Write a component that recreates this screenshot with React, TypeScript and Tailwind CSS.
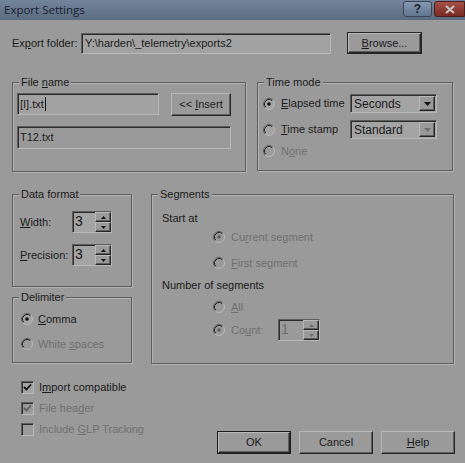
import React from "react";

const sunken =
  "border border-t-[#5c5c5c] border-l-[#5c5c5c] border-b-[#b9b9b9] border-r-[#b9b9b9] shadow-[inset_1px_1px_0_#2b2b2b]";
const raised =
  "border border-t-[#b9b9b9] border-l-[#b9b9b9] border-b-[#262626] border-r-[#262626] shadow-[inset_-1px_-1px_0_#5e5e5e] bg-[#9a9a9a]";

const Radio = ({ checked, disabled }: { checked?: boolean; disabled?: boolean }) => (
  <svg width="12" height="12" viewBox="0 0 12 12" className="shrink-0">
    <circle cx="6" cy="6" r="5.5" fill={disabled ? "#9a9a9a" : "#a4a4a4"} />
    <path d="M2.11 9.89 A5.5 5.5 0 0 1 9.89 2.11" fill="none" stroke="#5c5c5c" strokeWidth="1" />
    <path d="M9.89 2.11 A5.5 5.5 0 0 1 2.11 9.89" fill="none" stroke="#b9b9b9" strokeWidth="1" />
    <path d="M2.82 9.18 A4.5 4.5 0 0 1 9.18 2.82" fill="none" stroke="#222" strokeWidth="1" />
    {checked && <circle cx="6" cy="6" r="1.8" fill={disabled ? "#5e5e5e" : "#111"} />}
  </svg>
);

const Check = ({ checked, disabled }: { checked?: boolean; disabled?: boolean }) => (
  <div className={`w-[13px] h-[13px] shrink-0 ${sunken} ${disabled ? "bg-[#9a9a9a]" : "bg-[#a4a4a4]"} flex items-center justify-center`}>
    {checked && (
      <svg width="9" height="9" viewBox="0 0 9 9">
        <path d="M1 4 L3.5 6.5 L8 1.5" fill="none" stroke={disabled ? "#5e5e5e" : "#111"} strokeWidth="1.8" />
      </svg>
    )}
  </div>
);

const GroupBox = ({ title, className, children }: { title: React.ReactNode; className: string; children?: React.ReactNode }) => (
  <div className={`relative border border-[#5e5e5e] shadow-[inset_1px_1px_0_#b3b3b3,1px_1px_0_#b3b3b3] ${className}`}>
    <span className="absolute -top-[8px] left-[6px] px-[2px] bg-[#9a9a9a] leading-[14px] whitespace-nowrap">{title}</span>
    {children}
  </div>
);

const Arrow = ({ up, disabled, size = 3 }: { up?: boolean; disabled?: boolean; size?: number }) => (
  <svg width={size * 2 + 1} height={size + 1} viewBox={`0 0 ${size * 2 + 1} ${size + 1}`}>
    <path
      d={up ? `M0 ${size + 1} L${size + 0.5} 0 L${size * 2 + 1} ${size + 1} Z` : `M0 0 L${size * 2 + 1} 0 L${size + 0.5} ${size + 1} Z`}
      fill={disabled ? "#6e6e6e" : "#111"}
    />
  </svg>
);

const Spin = ({ value, className, disabled }: { value: string; className: string; disabled?: boolean }) => (
  <div className={`${sunken} ${disabled ? "bg-[#9a9a9a]" : "bg-[#a4a4a4]"} flex ${className}`}>
    <div className={`flex-1 pl-[2px] leading-[18px] text-[14px] ${disabled ? "text-[#6a6a6a]" : ""}`}>{value}</div>
    <div className="w-[16px] flex flex-col">
      <div className={`flex-1 ${raised} flex items-center justify-center`}>
        <Arrow up size={2} disabled={disabled} />
      </div>
      <div className={`flex-1 ${raised} flex items-center justify-center`}>
        <Arrow size={2} disabled={disabled} />
      </div>
    </div>
  </div>
);

const Combo = ({ value, disabled }: { value: string; disabled?: boolean }) => (
  <div className={`w-[87px] h-[19px] ${sunken} bg-[#a4a4a4] flex items-center`}>
    <span className="flex-1 pl-[3px] text-[12px]">{value}</span>
    <div className={`w-[16px] h-[15px] mr-[1px] ${raised} flex items-center justify-center`}>
      <Arrow disabled={disabled} />
    </div>
  </div>
);

const U = ({ children }: { children: React.ReactNode }) => <span className="underline underline-offset-[1px]">{children}</span>;

export default function App() {
  return (
    <div
      className="w-[465px] h-[463px] bg-[#9a9a9a] flex flex-col text-[11px] text-[#1a1a1a] overflow-hidden whitespace-nowrap"
      style={{ fontFamily: '"Liberation Sans", Arial, sans-serif' }}
    >
      {/* Title bar */}
      <div className="h-[20px] flex items-center bg-gradient-to-b from-[#73859c] to-[#5b6b81]">
        <span className="flex-1 pl-[4px] text-[11.5px] text-[#17202e]" style={{ fontFamily: '"Open Sans", sans-serif' }}>
          Export Settings
        </span>
        <div className="flex gap-[2px] self-start mt-[1px]">
          <div className="w-[29px] h-[16px] rounded-[3px] border border-[#3a4656] bg-gradient-to-b from-[#8699b0] to-[#637690] flex items-center justify-center text-[#1b2330] font-bold text-[12px] leading-none">
            ?
          </div>
          <div className="w-[31px] h-[16px] rounded-l-[3px] border border-[#4a1e1a] bg-gradient-to-b from-[#a55148] to-[#7a2a22] flex items-center justify-center">
            <svg width="10" height="9" viewBox="0 0 10 9">
              <path d="M1 1 L9 8 M9 1 L1 8" stroke="#c9c2c0" strokeWidth="2.2" />
            </svg>
          </div>
        </div>
      </div>

      {/* Export folder */}
      <div className="mt-[12px] pl-[12px] flex items-center h-[22px]">
        <span className="w-[69px]">
          Ex<U>p</U>ort folder:
        </span>
        <div className={`w-[250px] h-[21px] ${sunken} bg-[#a2a2a2] flex items-center pl-[3px]`}>
          Y:\harden\_telemetry\exports2
        </div>
        <div className="ml-[16px] w-[75px] h-[22px] border border-[#262626]">
          <div className={`w-full h-full ${raised} flex items-center justify-center`}>
            <span>
              <U>B</U>rowse...
            </span>
          </div>
        </div>
      </div>

      {/* File name / Time mode */}
      <div className="mt-[28px] pl-[12px] flex gap-[11px]">
        <GroupBox
          title={
            <>
              File <U>n</U>ame
            </>
          }
          className="w-[234px] h-[90px] pl-[4px] pt-[10px]"
        >
          <div className="flex items-start">
            <div className={`w-[142px] h-[22px] ${sunken} bg-[#a2a2a2] flex items-center pl-[2px]`}>
              [I].txt<span className="w-px h-[14px] bg-[#111] ml-px" />
            </div>
            <div className={`ml-[12px] w-[60px] h-[23px] ${raised} flex items-center justify-center`}>
              <span>
                &lt;&lt; <U>I</U>nsert
              </span>
            </div>
          </div>
          <div className={`mt-[10px] w-[214px] h-[23px] ${sunken} flex items-center pl-[2px]`}>T12.txt</div>
        </GroupBox>

        <GroupBox title="Time mode" className="w-[196px] h-[89px] pl-[5px] pt-[11px]">
          <div className="flex items-center h-[19px]">
            <Radio checked />
            <span className="ml-[6px] w-[69px]">
              <U>E</U>lapsed time
            </span>
            <Combo value="Seconds" />
          </div>
          <div className="mt-[7px] flex items-center h-[19px]">
            <Radio />
            <span className="ml-[6px] w-[69px]">
              <U>T</U>ime stamp
            </span>
            <Combo value="Standard" disabled />
          </div>
          <div className="mt-[3px] flex items-center h-[18px] text-[#707070]">
            <Radio disabled />
            <span className="ml-[6px]">
              N<U>o</U>ne
            </span>
          </div>
        </GroupBox>
      </div>

      {/* Data format / Delimiter / Segments */}
      <div className="mt-[22px] pl-[12px] flex gap-[19px]">
        <div className="flex flex-col gap-[10px]">
          <GroupBox title="Data format" className="w-[120px] h-[93px] pl-[7px] pt-[16px]">
            <div className="flex items-center">
              <span className="w-[52px]">
                <U>W</U>idth:
              </span>
              <Spin value="3" className="w-[40px] h-[22px]" />
            </div>
            <div className="mt-[11px] flex items-center">
              <span className="w-[52px]">
                <U>P</U>recision:
              </span>
              <Spin value="3" className="w-[40px] h-[22px]" />
            </div>
          </GroupBox>
          <GroupBox title="Delimiter" className="w-[120px] h-[66px] pl-[8px] pt-[12px]">
            <div className="flex items-center h-[18px]">
              <Radio checked />
              <span className="ml-[5px]">
                <U>C</U>omma
              </span>
            </div>
            <div className="mt-[7px] flex items-center h-[18px] text-[#707070]">
              <Radio disabled />
              <span className="ml-[5px]">
                White <U>s</U>paces
              </span>
            </div>
          </GroupBox>
        </div>

        <GroupBox title="Segments" className="w-[303px] h-[170px] pl-[10px] pt-[15px]">
          <div className="h-[16px] flex items-center">Start at</div>
          <div className="mt-[2px] ml-[51px] h-[18px] flex items-center text-[#707070]">
            <Radio checked disabled />
            <span className="ml-[6px]">
              Cu<U>r</U>rent segment
            </span>
          </div>
          <div className="mt-[8px] ml-[51px] h-[18px] flex items-center text-[#707070]">
            <Radio disabled />
            <span className="ml-[6px]">
              <U>F</U>irst segment
            </span>
          </div>
          <div className="mt-[5px] h-[16px] flex items-center">Number of segments</div>
          <div className="mt-[5px] ml-[51px] h-[18px] flex items-center text-[#707070]">
            <Radio disabled />
            <span className="ml-[6px]">
              <U>A</U>ll
            </span>
          </div>
          <div className="mt-[3px] ml-[51px] h-[22px] flex items-center text-[#707070]">
            <Radio checked disabled />
            <span className="ml-[6px] w-[47px]">
              Co<U>u</U>nt:
            </span>
            <Spin value="1" className="w-[42px] h-[22px]" disabled />
          </div>
        </GroupBox>
      </div>

      {/* Checkboxes and buttons */}
      <div className="mt-[13px] pl-[21px] flex items-start">
        <div className="w-[196px] flex flex-col">
          <div className="h-[21px] flex items-center">
            <Check checked />
            <span className="ml-[5px]">
              I<U>m</U>port compatible
            </span>
          </div>
          <div className="h-[21px] flex items-center text-[#707070]">
            <Check checked disabled />
            <span className="ml-[5px]">
              File hea<U>d</U>er
            </span>
          </div>
          <div className="h-[21px] flex items-center text-[#707070]">
            <Check disabled />
            <span className="ml-[5px]">
              Include <U>G</U>LP Tracking
            </span>
          </div>
        </div>
        <div className="mt-[54px] flex gap-[8px]">
          <div className="w-[74px] h-[23px] border border-[#1c1c1c]">
            <div className={`w-full h-full ${raised} flex items-center justify-center`}>OK</div>
          </div>
          <div className={`w-[74px] h-[23px] ${raised} flex items-center justify-center`}>Cancel</div>
          <div className={`w-[74px] h-[23px] ${raised} flex items-center justify-center`}>
            <span>
              <U>H</U>elp
            </span>
          </div>
        </div>
      </div>
    </div>
  );
}
